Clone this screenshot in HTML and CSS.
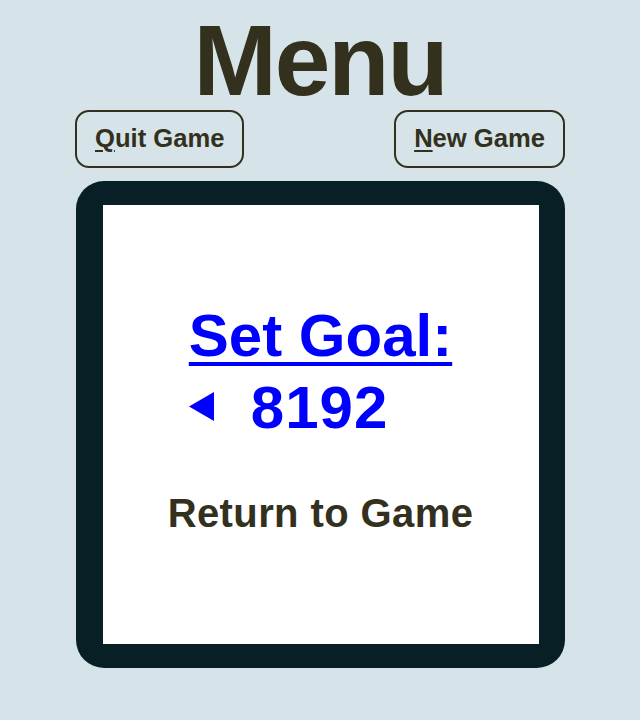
FILE: index.html
```html
<!DOCTYPE html>
<html lang="en">
<head>
<meta charset="utf-8">
<title>Menu</title>
<link rel="stylesheet" href="styles.css">
</head>
<body>
<div class="page">
  <h1 class="title">Menu</h1>
  <div class="actions">
    <button class="btn" type="button"><u>Q</u>uit Game</button>
    <button class="btn" type="button"><u>N</u>ew Game</button>
  </div>
  <div class="board">
    <div class="screen">
      <div class="goal">
        <a class="goal-label" href="#">Set Goal:</a>
        <div class="goal-value">
          <svg class="arrow" width="25" height="29" viewBox="0 0 25 29" aria-hidden="true"><polygon points="0,14.5 25,0 25,29" fill="#0000ff"/></svg>
          <span class="goal-number">8192</span>
        </div>
      </div>
      <div class="return">Return to Game</div>
    </div>
  </div>
</div>
</body>
</html>
```

FILE: styles.css
```css
html, body {
  margin: 0;
  padding: 0;
}
body {
  background: #d6e4e9;
  font-family: "Liberation Sans", Arial, sans-serif;
  color: #33301e;
}
.page {
  width: 490px;
  margin: 0 auto;
}
.title {
  margin: 0;
  padding-top: 10px;
  font-size: 100px;
  line-height: 100px;
  font-weight: 700;
  letter-spacing: -2px;
  text-align: center;
  color: #33301e;
}
.actions {
  display: flex;
  justify-content: space-between;
}
.btn {
  font-family: "Liberation Sans", Arial, sans-serif;
  font-size: 25.6px;
  font-weight: 700;
  line-height: 30px;
  color: #33301e;
  background: transparent;
  border: 2px solid #33301e;
  border-radius: 14px;
  padding: 11px 18px 13px;
  margin: 0;
}
.btn u {
  text-decoration-thickness: 2px;
  text-underline-offset: 3px;
}
.board {
  margin: 13px auto 0;
  width: 489px;
  box-sizing: border-box;
  background: #081f26;
  border-radius: 28px;
  padding: 24px 26px 24px 27px;
}
.screen {
  background: #ffffff;
  height: 439px;
  padding-top: 95px;
  box-sizing: border-box;
  display: flex;
  flex-direction: column;
  align-items: center;
}
.goal {
  display: flex;
  flex-direction: column;
  align-items: flex-start;
  color: #0000ff;
}
.goal-label {
  color: #0000ff;
  font-size: 60px;
  line-height: 72px;
  font-weight: 700;
  text-decoration: underline;
  text-decoration-thickness: 3.5px;
  text-underline-offset: 6px;
}
.goal-value {
  display: flex;
  align-items: center;
  height: 72px;
}
.arrow {
  display: block;
  margin-top: -4px;
  margin-right: 37px;
}
.goal-number {
  font-size: 60px;
  line-height: 72px;
  font-weight: 700;
  letter-spacing: 1px;
}
.return {
  margin-top: 45px;
  font-size: 40px;
  line-height: 48px;
  font-weight: 700;
  letter-spacing: 0.4px;
  color: #33301e;
}
```
